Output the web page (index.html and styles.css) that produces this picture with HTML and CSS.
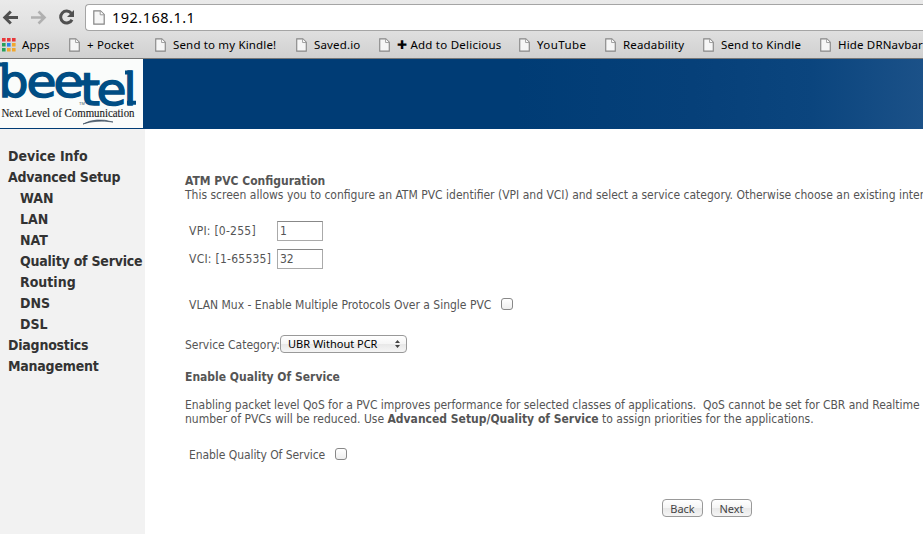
FILE: index.html
```html
<!DOCTYPE html>
<html lang="en">
<head>
<meta charset="utf-8">
<title>192.168.1.1</title>
<link rel="stylesheet" href="styles.css">
</head>
<body>
<svg width="0" height="0" class="defs" aria-hidden="true">
  <symbol id="page" viewBox="0 0 12 15">
    <path d="M.8.8H7.4L11.2 4.6V14.2H.8Z" fill="#f6f6f6" stroke="#858585" stroke-width="1.2"/>
    <path d="M7.2 1V4.8H11" fill="#fff" stroke="#999"/>
  </symbol>
</svg>
<header class="browser">
  <div class="toolbar">
    <svg class="nav-icons" width="85" height="34" viewBox="0 0 85 34" fill="none">
      <path d="M18 17.500H5M10.800 11.500 4.800 17.500 10.800 23.500" stroke="#505050" stroke-width="3"/>
      <path d="M31 17.500H44M38.500 11.500 44.500 17.500 38.500 23.500" stroke="#b0b0b0" stroke-width="2.600"/>
      <path d="M71.300 13.200A6 6 0 1 0 72 19.700" stroke="#505050" stroke-width="3"/>
      <path d="M74 10V17H67Z" fill="#505050"/>
    </svg>
    <div class="address"><svg class="address-icon"><use href="#page"/></svg><span>192.168.1.1</span></div>
  </div>
  <nav class="bookmarks">
    <a class="bm apps"><svg width="14" height="14" viewBox="0 0 14 14"><path fill="#e8373a" d="M0 0h3.600v3.600H0zM5 0h3.600v3.600H5zM10 0h3.600v3.600h-3.600z"/><path fill="#26a05a" d="M0 5h3.600v3.600H0zM0 10h3.600v3.600H0z"/><path fill="#2a82e8" d="M5 5h3.600v3.600H5z"/><path fill="#f1a72f" d="M10 5h3.600v3.600h-3.600zM5 10h3.600v3.600H5zM10 10h3.600v3.600h-3.600z"/></svg><span>Apps</span></a>
    <a class="bm pocket"><svg class="pg"><use href="#page"/></svg><span>+ Pocket</span></a>
    <a class="bm mykindle"><svg class="pg"><use href="#page"/></svg><span>Send to my Kindle!</span></a>
    <a class="bm saved"><svg class="pg"><use href="#page"/></svg><span>Saved.io</span></a>
    <a class="bm delicious"><svg class="pg"><use href="#page"/></svg><span>✚ Add to Delicious</span></a>
    <a class="bm youtube"><svg class="pg"><use href="#page"/></svg><span>YouTube</span></a>
    <a class="bm readability"><svg class="pg"><use href="#page"/></svg><span>Readability</span></a>
    <a class="bm kindle"><svg class="pg"><use href="#page"/></svg><span>Send to Kindle</span></a>
    <a class="bm navbar"><svg class="pg"><use href="#page"/></svg><span>Hide DRNavbar</span></a>
  </nav>
</header>
<div class="banner">
  <svg class="logo" width="143" height="69" viewBox="0 0 143 69">
    <g class="wordmark">
      <text x="-1.500" y="37.500" textLength="30" lengthAdjust="spacingAndGlyphs">b</text>
      <text x="26.500" y="37.500" textLength="30" lengthAdjust="spacingAndGlyphs">e</text>
      <text x="53.500" y="37.500" textLength="30" lengthAdjust="spacingAndGlyphs">e</text>
      <text x="80" y="45.500" textLength="20" lengthAdjust="spacingAndGlyphs">t</text>
      <text x="96.500" y="45.500" textLength="30" lengthAdjust="spacingAndGlyphs">e</text>
      <text x="123.500" y="45.500" textLength="13" lengthAdjust="spacingAndGlyphs">l</text>
    </g>
    <path d="M0 5.500H7M125 13.500H132M127 43.800H136M80 24.500H98" stroke="#004d84" stroke-width="4"/>
    <text class="tm" x="79" y="46">TM</text>
    <text class="tagline" x="1.500" y="57.500" textLength="133" lengthAdjust="spacingAndGlyphs">Next Level of Communication</text>
    <path d="M83 65Q96 58 113 63Q96 60.500 83 65Z" fill="#456" stroke="#456" stroke-width=".7"/>
  </svg>
</div>
<div class="layout">
  <aside class="sidebar">
    <a>Device Info</a>
    <a class="tight">Advanced Setup</a>
    <div class="submenu">
      <a>WAN</a><a>LAN</a><a>NAT</a><a class="tight">Quality of Service</a><a>Routing</a><a>DNS</a><a>DSL</a>
    </div>
    <a class="tight">Diagnostics</a>
    <a class="tight">Management</a>
  </aside>
  <main class="content">
    <h1>ATM PVC Configuration</h1>
    <p class="intro">This screen allows you to configure an ATM PVC identifier (VPI and VCI) and select a service category. Otherwise choose an existing inter</p>
    <div class="field first"><label for="vpi">VPI: [0-255]</label><input id="vpi" type="text" value="1"></div>
    <div class="field"><label for="vci">VCI: [1-65535]</label><input id="vci" type="text" value="32"></div>
    <div class="check vlan"><label for="vlan">VLAN Mux - Enable Multiple Protocols Over a Single PVC</label><input id="vlan" type="checkbox"></div>
    <div class="service"><span>Service Category:</span><button class="select"><span>UBR Without PCR</span><svg width="5" height="8" viewBox="0 0 5 8"><path d="M0 3L2.500 0L5 3ZM0 5L2.500 8L5 5Z" fill="#444"/></svg></button></div>
    <h2>Enable Quality Of Service</h2>
    <p class="qos"><span class="line">Enabling packet level QoS for a PVC improves performance for selected classes of applications.&nbsp; QoS cannot be set for CBR and Realtime</span><br>number of PVCs will be reduced. Use <b>Advanced Setup/Quality of Service</b> to assign priorities for the applications.</p>
    <div class="check enable"><label for="qos">Enable Quality Of Service</label><input id="qos" type="checkbox"></div>
    <div class="actions"><button>Back</button><button>Next</button></div>
  </main>
</div>
</body>
</html>
```
FILE: styles.css
```css
* { box-sizing: border-box; }
body { margin: 0; width: 923px; height: 534px; overflow: hidden; background: #fff; color: #555; font: 12px/14px "DejaVu Sans Condensed", "DejaVu Sans", sans-serif; font-stretch: condensed; white-space: nowrap; }
.defs { position: absolute; }
h1, h2, p { margin: 0; font-size: inherit; }
.browser { height: 59px; background: linear-gradient(#eaeaea 0, #e0e0e0 30px, #d0d0d0 58px); border-bottom: 1px solid #777; color: #000; font-family: "Noto Sans", sans-serif; font-stretch: normal; }
.toolbar { display: flex; height: 34px; }
.nav-icons { flex: none; }
.address { display: flex; flex: 1; align-items: center; margin-top: 4px; height: 27px; padding: 0 0 1px 7px; background: #fff; border: 1px solid #a5a5a5; border-right: 0; border-radius: 4px 0 0 4px; font-size: 14.5px; letter-spacing: .48px; }
.address-icon { width: 12px; height: 15px; margin-right: 7px; }
.bookmarks { display: flex; height: 22px; padding-left: 2px; }
.bm { display: flex; align-items: center; flex: none; width: 103px; font-size: 11.5px; letter-spacing: .16px; }
.bm svg { flex: none; margin-right: 7px; }
.bm span { margin-top: -1px; }
.pg { width: 11px; height: 14px; }
.apps { width: 67px; }
.apps svg { margin-right: 6px; }
.pocket { width: 86px; }
.mykindle { width: 141px; }
.saved { width: 83px; }
.delicious { width: 140px; letter-spacing: .23px; }
.youtube { width: 86px; letter-spacing: .4px; }
.readability { width: 98px; }
.kindle { width: 117px; }
.banner { height: 70px; background: linear-gradient(90deg, #003c75 0, #003c75 56%, #064079 75%, #0b457e 88%, #1b5188 100%); }
.logo { display: block; background: #fafcfb; }
.wordmark { font-family: "DejaVu Sans", sans-serif; font-stretch: normal; font-size: 45px; fill: #004d84; stroke: #004d84; stroke-width: 1.4px; }
.tm { font: 4px "Liberation Sans", sans-serif; fill: #456; }
.tagline { font: 11.5px "Liberation Serif", serif; fill: #222; stroke: #222; stroke-width: .15px; }
.layout { display: flex; height: 405px; }
.sidebar { flex: none; width: 145px; padding: 17px 0 0 8px; background: #f2f2f2; color: #333; font-size: 14px; font-weight: bold; line-height: 21px; }
.sidebar a { display: block; }
.sidebar .tight { letter-spacing: -.22px; }
.submenu { padding-left: 12px; }
.content { flex: 1; min-width: 0; padding: 45px 0 0 40px; }
.field { display: flex; align-items: center; height: 20px; margin: 8px 0 0 4px; }
.field.first { margin-top: 19px; }
.field label { width: 88px; letter-spacing: .25px; }
.field input { width: 46px; height: 20px; padding: 1px 2px; border: 1px solid #aaa; border-top-color: #888; color: #555; font: inherit; }
.check { display: flex; align-items: center; height: 14px; margin-left: 4px; }
.check label { padding-top: 1px; }
.check input { appearance: none; width: 12px; height: 12px; margin: 0 0 0 10px; border: 1px solid #888; border-radius: 3px; background: linear-gradient(#fff, #eee); }
.vlan { margin-top: 28px; }
.service { display: flex; align-items: center; height: 18px; margin-top: 24px; }
.service > span { width: 93px; padding-top: 1px; letter-spacing: -.03px; }
button { height: 18px; border: 1px solid #999; border-radius: 4px; background: linear-gradient(#fff, #f5f5f5 50%, #e8e8e8 51%, #f5f5f5); font: 11px "Noto Sans", sans-serif; color: #444; padding: 0; }
.select { display: flex; align-items: center; justify-content: space-between; width: 127px; margin-left: 2px; padding: 0 6px 1px 7px; color: #000; }
h2 { margin-top: 17px; }
.qos { margin-top: 14px; }
.line { letter-spacing: -.045px; }
.enable { margin-top: 21px; }
.enable label { letter-spacing: -.07px; }
.actions { display: flex; gap: 8px; margin: 38px 0 0 477px; }
.actions button { width: 41px; }
```
